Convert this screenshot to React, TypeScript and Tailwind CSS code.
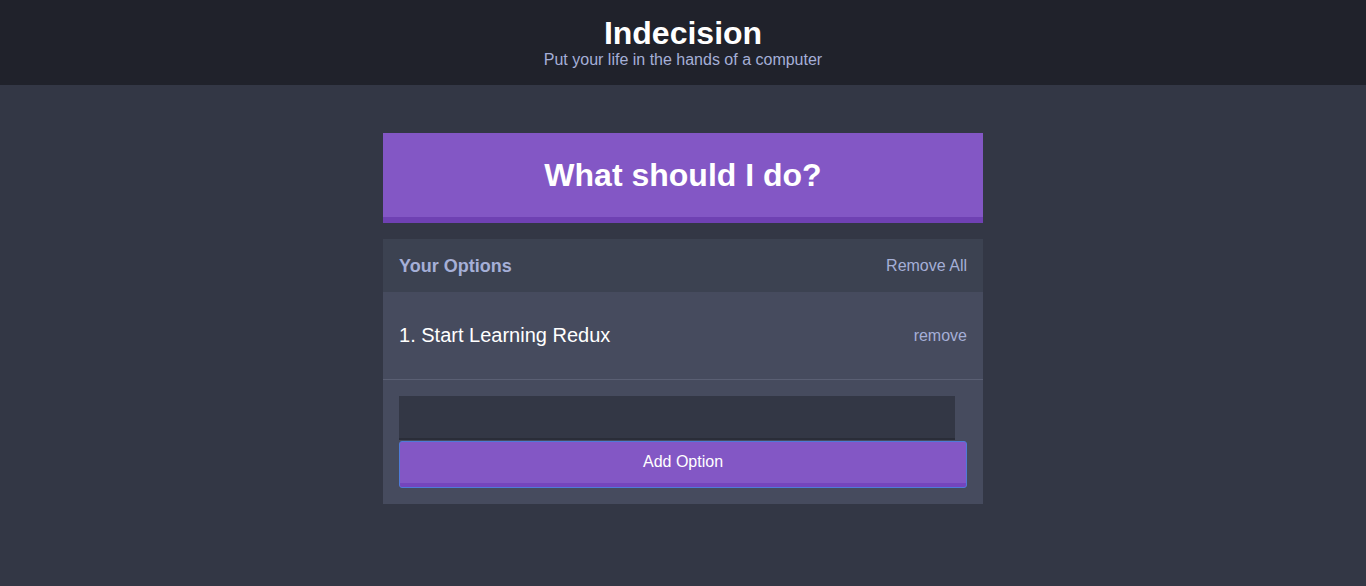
const options = ["Start Learning Redux"]

export default function App() {
  return (
    <div className="min-h-[586px] bg-[#333745] font-['Liberation_Sans',Arial,sans-serif]">
      {/* Header */}
      <header className="bg-[#20222b] pt-[15px] pb-[17px] text-center">
        <h1 className="text-[32px] leading-[36px] font-bold text-white">Indecision</h1>
        <h2 className="mt-px text-[16px] leading-[16px] text-[#a5afd7]">Put your life in the hands of a computer</h2>
      </header>

      <div className="mx-auto w-[600px] pt-12">
        <button className="w-full h-[90px] bg-[#8357c5] border-b-[6px] border-[#6f41b3] text-white text-[32px] font-bold">
          What should I do?
        </button>

        <div className="mt-4 bg-[#464b5e]">
          <div className="h-[53px] bg-[#3c4251] flex items-center justify-between px-4">
            <h3 className="pt-px text-[18px] font-bold text-[#a5afd7]">Your Options</h3>
            <button className="text-[16px] text-[#a5afd7]">Remove All</button>
          </div>

          {options.map((option, index) => (
            <div
              key={index}
              className="h-[88px] flex items-center justify-between px-4 border-b border-[#5a5f73]"
            >
              <p className="mb-px text-[20px] text-white">
                {index + 1}. {option}
              </p>
              <button className="text-[16px] text-[#a5afd7]">remove</button>
            </div>
          ))}

          <form className="px-4 pt-4 pb-4">
            <input
              type="text"
              className="block w-[556px] h-[44px] bg-[#333745] border-b-2 border-[#2a2d38] outline-none text-white px-2"
            />
            <button
              type="button"
              className="block w-full h-[47px] mt-px bg-[#8357c5] border border-[#4f7ad8] rounded-[3px] overflow-hidden text-white text-[16px]"
            >
              <span className="block h-full border-b-4 border-[#7445bd] leading-[40px]">Add Option</span>
            </button>
          </form>
        </div>
      </div>
    </div>
  )
}
